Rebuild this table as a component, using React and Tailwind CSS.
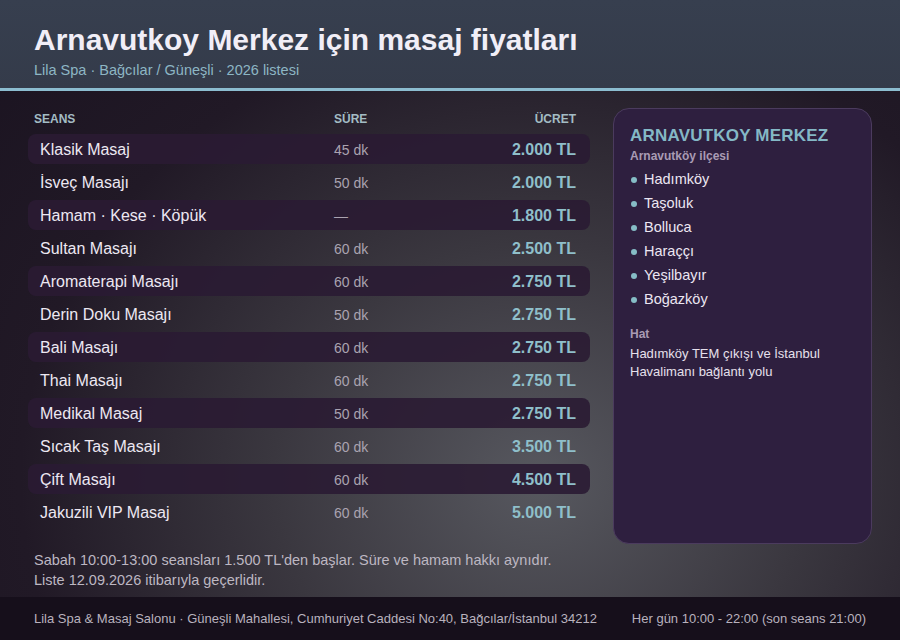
const seanslar = [
  { ad: 'Klasik Masaj', sure: '45 dk', ucret: '2.000 TL' },
  { ad: 'İsveç Masajı', sure: '50 dk', ucret: '2.000 TL' },
  { ad: 'Hamam · Kese · Köpük', sure: '—', ucret: '1.800 TL' },
  { ad: 'Sultan Masajı', sure: '60 dk', ucret: '2.500 TL' },
  { ad: 'Aromaterapi Masajı', sure: '60 dk', ucret: '2.750 TL' },
  { ad: 'Derin Doku Masajı', sure: '50 dk', ucret: '2.750 TL' },
  { ad: 'Bali Masajı', sure: '60 dk', ucret: '2.750 TL' },
  { ad: 'Thai Masajı', sure: '60 dk', ucret: '2.750 TL' },
  { ad: 'Medikal Masaj', sure: '50 dk', ucret: '2.750 TL' },
  { ad: 'Sıcak Taş Masajı', sure: '60 dk', ucret: '3.500 TL' },
  { ad: 'Çift Masajı', sure: '60 dk', ucret: '4.500 TL' },
  { ad: 'Jakuzili VIP Masaj', sure: '60 dk', ucret: '5.000 TL' },
];

const mahalleler = ['Hadımköy', 'Taşoluk', 'Bolluca', 'Haraççı', 'Yeşilbayır', 'Boğazköy'];

function App() {
  return (
    <div className="flex h-[640px] w-[900px] flex-col overflow-hidden bg-[radial-gradient(ellipse_at_60%_75%,#57585f_0%,#3a373f_35%,#211926_68%,#1a1320_100%)] font-['Liberation_Sans',Arial,sans-serif]">
      <header className="h-[91px] shrink-0 border-b-[3px] border-[#8cbdd0] bg-[linear-gradient(180deg,#373f4f,#343b4a)] px-[34px] pt-[22px]">
        <h1 className="text-[30px] font-bold leading-[36px] text-[#f1eef7]">Arnavutkoy Merkez için masaj fiyatları</h1>
        <p className="mt-[3px] text-[14.5px] leading-[18px] text-[#8db6c4]">Lila Spa · Bağcılar / Güneşli · 2026 listesi</p>
      </header>

      <div className="flex gap-[23px] px-[28px] pt-[17px]">
        <div className="w-[562px]">
          <div className="mb-[5px] mt-[1px] grid h-[20px] grid-cols-[300px_1fr_auto] items-center pl-[6px] pr-[14px] text-[12px] font-bold text-[#a3bcc4]">
            <span>SEANS</span>
            <span>SÜRE</span>
            <span>ÜCRET</span>
          </div>
          <div className="flex flex-col gap-[3px]">
            {seanslar.map((s, i) => (
              <div
                key={s.ad}
                className={`grid h-[30px] grid-cols-[294px_1fr_auto] items-center rounded-[8px] pl-[12px] pr-[14px] pt-[2px] ${i % 2 === 0 ? 'bg-[#2a1b33]/90' : ''}`}
              >
                <span className="text-[16px] text-[#ede8f2]">{s.ad}</span>
                <span className="text-[14px] text-[#aaa3b0]">{s.sure}</span>
                <span className="text-[16px] font-bold text-[#8fbfca]">{s.ucret}</span>
              </div>
            ))}
          </div>
        </div>

        <aside className="h-[436px] w-[259px] rounded-[16px] border border-[#4b3b5e] bg-[#2e1f3f] px-[16px] pt-[17px]">
          <h2 className="text-[17px] font-bold leading-[20px] tracking-[0.2px] text-[#84b8c6]">ARNAVUTKOY MERKEZ</h2>
          <p className="mt-[2px] text-[12px] font-bold leading-[16px] text-[#a99bb4]">Arnavutköy ilçesi</p>
          <ul className="mt-[4px]">
            {mahalleler.map((m) => (
              <li key={m} className="flex h-[24px] items-center gap-[7px] text-[14.5px] text-[#ece6f2]">
                <span className="ml-[1px] h-[6px] w-[6px] rounded-full bg-[#86bcc6]" />
                {m}
              </li>
            ))}
          </ul>
          <p className="mt-[14px] text-[12px] font-bold leading-[16px] text-[#a99bb4]">Hat</p>
          <p className="mt-[3px] text-[13px] leading-[18px] text-[#e6e0ec]">
            Hadımköy TEM çıkışı ve İstanbul Havalimanı bağlantı yolu
          </p>
        </aside>
      </div>

      <div className="mt-[6px] px-[34px] text-[14.5px] leading-[20px] text-[#bdb7c2]">
        <p>Sabah 10:00-13:00 seansları 1.500 TL'den başlar. Süre ve hamam hakkı aynıdır.</p>
        <p>Liste 12.09.2026 itibarıyla geçerlidir.</p>
      </div>

      <footer className="mt-auto flex h-[43px] items-center justify-between bg-[#160f1b] px-[34px] text-[13px] text-[#b9b2be]">
        <span>Lila Spa &amp; Masaj Salonu · Güneşli Mahallesi, Cumhuriyet Caddesi No:40, Bağcılar/İstanbul 34212</span>
        <span>Her gün 10:00 - 22:00 (son seans 21:00)</span>
      </footer>
    </div>
  );
}

export default App;
